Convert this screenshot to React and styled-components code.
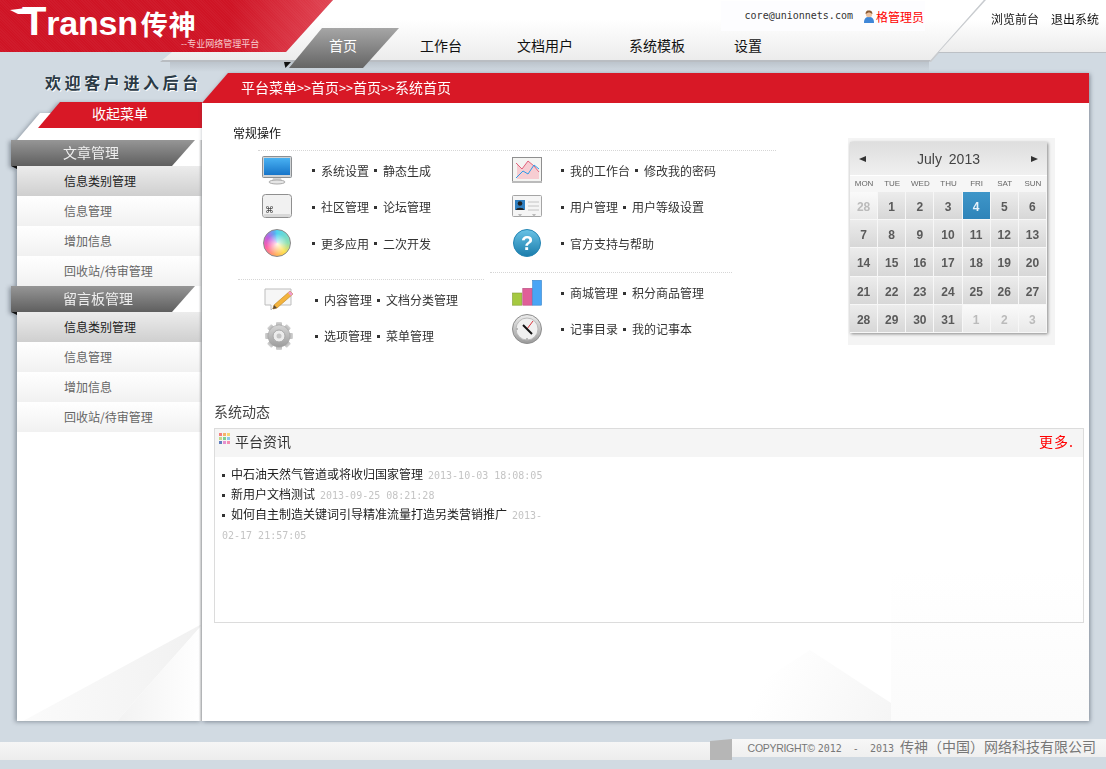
import React from 'react';
import styled, { createGlobalStyle } from 'styled-components';

const GlobalStyle = createGlobalStyle`
html, body {
  margin: 0;
  padding: 0;
}
body {
  background: #d1dae2;
  font-family: "Noto Sans CJK SC", "Liberation Sans", sans-serif;
  font-size: 12px;
  color: #333;
}
`;

const Page = styled.div`
width: 1106px;
height: 769px;
overflow: hidden;
background: #d1dae2;
`;

/* ---------- header ---------- */

const Header = styled.header`
position: relative;
display: flex;
height: 73px;
background: linear-gradient(to bottom, #bcc4cc, #d1dae2) 170px 62px / 759px 10px no-repeat;

&::before {
  content: '';
  position: absolute;
  inset: 0;
  background: linear-gradient(to bottom, #fff 0, #fff 20px, #ececec 60px, #b9bdc2 60px, #b9bdc2 62px, transparent 62px);
  clip-path: polygon(333px 0, 984px 0, 929px 62px, 160px 62px, 172px 52px, 286px 52px);
}

&::after {
  content: '';
  position: absolute;
  inset: 0;
  background: linear-gradient(to bottom, #fff 0, #fff 20px, #ececec 52px, #bcc0c5 52px, #bcc0c5 53px, transparent 53px);
  clip-path: polygon(986px 0, 1106px 0, 1106px 53px, 938px 53px);
}
`;

const Crease = styled.span`
position: absolute;
inset: 0;
background: #c9cbce;
clip-path: polygon(984px 0, 986px 0, 931px 62px, 929px 62px);
`;

const Brand = styled.div`
position: relative;
z-index: 1;
flex: none;
width: 333px;
height: 52px;
box-sizing: border-box;
padding: 3px 0 0 12px;
background:
  repeating-linear-gradient(45deg, rgba(255, 255, 255, 0.03) 0 1px, transparent 1px 2px),
  linear-gradient(100deg, #cf1425 0, #cf1425 68%, #e24a58 100%);
clip-path: polygon(0 0, 333px 0, 286px 52px, 0 52px);
`;

const Wordmark = styled.div`
display: flex;
align-items: baseline;
height: 37px;
color: #fff;
font-family: "Liberation Sans", sans-serif;
font-weight: 700;
font-size: 34px;
line-height: 37px;
letter-spacing: -0.2px;
`;

const WordT = styled.span`
font-size: 40px;
margin-left: 10px;
`;

const WordCn = styled.span`
font-family: "Noto Sans CJK SC", sans-serif;
font-size: 27px;
line-height: 26px;
letter-spacing: 1px;
margin-left: 3px;
`;

const LogoTail = styled.svg`
position: absolute;
left: 10px;
top: 7px;
`;

const Tagline = styled.div`
margin: -2px 0 0 169px;
font-size: 9px;
line-height: 12px;
color: #f7cdd0;
white-space: nowrap;
`;

const Nav = styled.nav`
position: relative;
z-index: 1;
display: flex;
flex: none;
align-items: flex-start;
height: 40px;
margin: 28px -60px 0 -44px;
font-size: 14px;
line-height: 34px;
color: #111;
white-space: nowrap;
`;

const ActiveTab = styled.a`
position: relative;
flex: none;
width: 110px;
height: 40px;
padding-left: 40px;
box-sizing: border-box;
color: #fff;

&::before {
  content: '';
  position: absolute;
  inset: 0;
  background: linear-gradient(to bottom, #a6a6a6, #656565);
  clip-path: polygon(33px 0, 110px 0, 74px 40px, 0 40px);
}

&::after {
  content: '';
  position: absolute;
  left: -5px;
  top: 34px;
  width: 7px;
  height: 6px;
  background: #111;
  clip-path: polygon(0 0, 100% 0, 20% 100%);
}
`;

const TabLabel = styled.span`
position: relative;
z-index: 1;
`;

const NavLink = styled.a`
margin-left: ${(p) => p.$gap}px;
`;

const UserBox = styled.div`
position: relative;
z-index: 1;
display: flex;
align-items: center;
justify-content: flex-end;
flex: none;
width: 204px;
height: 30px;
margin: 1px 0 0 auto;
padding-right: 1px;
box-sizing: border-box;
background: #fdfdff;
`;

const UserMail = styled.span`
font-family: "DejaVu Sans Mono", monospace;
font-size: 10px;
color: #333;
margin: -2px 10px 0 0;
`;

const UserName = styled.span`
color: #f00;
font-size: 12px;
margin-left: 1px;
`;

const TopLinks = styled.div`
position: relative;
z-index: 1;
display: flex;
flex: none;
gap: 12px;
margin: 11px 7px 0 66px;
color: #111;
line-height: 16px;
`;

/* ---------- body ---------- */

const Body = styled.div`
display: flex;
align-items: flex-start;
`;

const Side = styled.aside`
flex: none;
width: 202px;
`;

const Welcome = styled.div`
height: 29px;
padding-left: 45px;
font-size: 16px;
font-weight: 700;
line-height: 18px;
letter-spacing: 3.6px;
color: #2b3a46;
text-shadow: 1px 1px 0 #fff;
white-space: nowrap;
`;

const Rail = styled.div`
position: relative;
height: 581px;
margin: 11px 0 0 17px;
padding-top: 27px;
filter: drop-shadow(-2px 1px 2px rgba(60, 70, 85, 0.45));

&::before {
  content: '';
  position: absolute;
  inset: 0;
  background: #fff;
  clip-path: polygon(23px 0, 185px 0, 185px 100%, 0 100%, 0 27px);
}

&::after {
  content: '';
  position: absolute;
  top: 27px;
  right: 0;
  bottom: 0;
  width: 3px;
  background: linear-gradient(to right, transparent, #bcbcbc);
}
`;

const Collapse = styled.div`
position: absolute;
top: -11px;
left: 21px;
width: 164px;
height: 26px;
background: #d81826;
color: #fff;
font-size: 14px;
line-height: 23px;
text-align: center;
clip-path: polygon(22px 0, 100% 0, 100% 100%, 0 100%);
`;

const FoldWide = styled.span`
position: absolute;
left: 0;
bottom: 0;
width: 185px;
height: 96px;
background: linear-gradient(to right, #fbfbfb, #f1f1f1);
clip-path: polygon(6px 100%, 183px 0, 185px 0, 100px 100%);
`;

const FoldSoft = styled.span`
position: absolute;
right: 0;
bottom: 0;
width: 85px;
height: 96px;
background: linear-gradient(to right, #f2f2f2, #fff);
clip-path: polygon(0 100%, 100% 0, 100% 100%);
`;

const GroupHead = styled.div`
position: relative;
width: 184px;
height: 26px;
margin-left: -6px;
padding-left: 52px;
box-sizing: border-box;
color: #eee;
font-size: 14px;
line-height: 24px;

&::before {
  content: '';
  position: absolute;
  inset: 0;
  background: linear-gradient(to bottom, #969696, #5f5f5f);
  clip-path: polygon(0 0, 100% 0, 161px 100%, 0 100%);
}

&::after {
  content: '';
  position: absolute;
  left: 0;
  top: 26px;
  width: 6px;
  height: 3px;
  background: #111;
  clip-path: polygon(0 0, 100% 0, 100% 100%);
}
`;

const HeadLabel = styled.span`
position: relative;
`;

const RailItem = styled.a`
position: relative;
display: block;
height: 30px;
padding-left: 47px;
box-sizing: border-box;
line-height: 30px;
color: ${(p) => (p.$active ? '#222' : '#666')};
background: ${(p) =>
    p.$active
      ? 'linear-gradient(to bottom, #ececec, #cfcfcf)'
      : 'linear-gradient(to bottom, #fff, #f1f1f1)'};
`;

const Main = styled.main`
flex: none;
width: 887px;
filter: drop-shadow(1px 1px 2px rgba(60, 70, 85, 0.55));
`;

const Crumbs = styled.div`
height: 30px;
padding-left: 39px;
background: #d81826;
color: #fff;
font-size: 14px;
line-height: 29px;
clip-path: polygon(26px 0, 100% 0, 100% 100%, 0 100%);
`;

const CrumbSep = styled.span`
font-size: 12.6px;
`;

const Content = styled.div`
position: relative;
height: 618px;
background: #fff;
`;

const GlowRight = styled.span`
position: absolute;
right: 0;
bottom: 0;
width: 198px;
height: 151px;
background: linear-gradient(to bottom, #fff, #fbfbfb);
`;

const GlowLeft = styled.span`
position: absolute;
left: 498px;
bottom: 0;
width: 191px;
height: 71px;
background: linear-gradient(115deg, #fff 35%, #f5f5f5 100%);
clip-path: polygon(110px 0, 100% 53px, 100% 100%, 0 100%);
`;

const TopRow = styled.div`
position: relative;
display: flex;
align-items: flex-start;
height: 297px;
padding-left: 31px;
`;

const Ops = styled.section`
flex: none;
width: 545px;
padding-top: 22px;
`;

const OpsTitle = styled.div`
height: 16px;
line-height: 16px;
color: #111;
`;

const DotLine = styled.div`
height: 0;
margin: ${(p) => p.$margin};
width: ${(p) => p.$width}px;
border-top: 1px dotted #d6d6d6;
`;

const OpsCols = styled.div`
display: flex;
margin-left: 5px;
`;

const OpsCol = styled.div`
flex: none;
width: 252px;
`;

const OpRow = styled.div`
display: flex;
align-items: center;
height: ${(p) => p.$h || 36}px;
padding-left: ${(p) => p.$indent}px;
`;

const IconBox = styled.span`
display: flex;
align-items: center;
justify-content: center;
flex: none;
width: 30px;
height: 30px;
margin-right: ${(p) => p.$gap}px;
`;

const OpLink = styled.a`
display: inline-flex;
align-items: center;
margin-right: 5px;
color: #333;
white-space: nowrap;

&::before {
  content: '';
  width: 3px;
  height: 3px;
  margin: 1px 6px 0 0;
  background: #333;
}
`;

const Wheel = styled.span`
display: block;
width: 28px;
height: 28px;
border-radius: 50%;
box-sizing: border-box;
border: 1px solid #888;
background:
  radial-gradient(circle at 50% 55%, rgba(255, 255, 255, 0.85) 0, rgba(255, 255, 255, 0) 55%),
  conic-gradient(#4fd3f0 0deg, #8fe0b0 90deg, #ffe14d 140deg, #ffae5a 185deg, #ff5fa8 250deg, #c060e0 300deg, #5fa8f0 345deg, #4fd3f0 360deg);
`;

/* calendar */

const CalFrame = styled.div`
flex: none;
width: 207px;
height: 207px;
margin: 35px 0 0 70px;
padding: 4px 0 0 2px;
box-sizing: border-box;
background: #f4f4f4;
`;

const Calendar = styled.div`
width: 197px;
height: 191px;
background: #f0f0f0;
box-shadow: 1px 1px 3px rgba(0, 0, 0, 0.45);
`;

const CalHead = styled.div`
display: flex;
align-items: center;
justify-content: space-between;
height: 33px;
padding: 0 9px;
box-sizing: border-box;
background: linear-gradient(to bottom, #dedede, #f0f0f0);
font-family: "Liberation Sans", sans-serif;
font-size: 14px;
color: #444;
word-spacing: 3px;
`;

const CalArrow = styled.span`
width: 0;
height: 0;
border-top: 3.5px solid transparent;
border-bottom: 3.5px solid transparent;
border-${(p) => (p.$next ? 'left' : 'right')}: 7px solid #333;
`;

const CalWeek = styled.div`
display: grid;
grid-template-columns: repeat(7, 1fr);
height: 17px;
background: #f6f6f6;
border-top: 1px solid #fff;
box-sizing: border-box;
font-family: "Liberation Sans", sans-serif;
font-size: 8px;
line-height: 15px;
text-align: center;
color: #666;
`;

const CalGrid = styled.div`
display: grid;
grid-template-columns: repeat(7, 1fr);
grid-auto-rows: 28.2px;
`;

const dayStyles = {
  normal: 'linear-gradient(to bottom, #ececec, #d7d7d7)',
  muted: 'linear-gradient(to bottom, #fafafa, #e9e9e9)',
  active: 'linear-gradient(to bottom, #3e96c9, #2f84b9)',
};

const dayColors = { normal: '#5a5a5a', muted: '#bbb', active: '#e6f2fa' };

const CalDay = styled.div`
box-sizing: border-box;
border-right: 1px solid #f7f7f7;
border-bottom: 1px solid #f7f7f7;
background: ${(p) => dayStyles[p.$kind]};
color: ${(p) => dayColors[p.$kind]};
font-family: "Liberation Sans", sans-serif;
font-size: 12px;
font-weight: 700;
line-height: 30px;
text-align: center;
`;

/* news */

const NewsTitle = styled.div`
position: relative;
height: 28px;
padding-left: 12px;
font-size: 14px;
line-height: 22px;
color: #444;
`;

const NewsPanel = styled.section`
position: relative;
width: 870px;
height: 195px;
margin-left: 12px;
box-sizing: border-box;
border: 1px solid #dcdcdc;
`;

const NewsHead = styled.div`
display: flex;
align-items: center;
height: 24px;
padding: 0 9px 4px 4px;
background: #f5f5f5;
font-size: 14px;
color: #333;
`;

const Swatches = styled.span`
display: grid;
grid-template-columns: repeat(3, 3px);
grid-auto-rows: 3px;
gap: 1px;
margin: -6px 5px 0 0;
`;

const Swatch = styled.i`
background: ${(p) => p.$c};
`;

const More = styled.a`
margin-left: auto;
color: #f00;
letter-spacing: 1px;
`;

const NewsList = styled.ul`
width: 325px;
margin: 0;
padding: 7px 0 0 7px;
list-style: none;
line-height: 20px;
`;

const NewsItem = styled.li`
color: #222;

&::before {
  content: '';
  display: inline-block;
  width: 3px;
  height: 3px;
  margin: 0 6px 2px 0;
  background: #333;
}
`;

const NewsDate = styled.span`
margin-left: 5px;
font-family: "DejaVu Sans Mono", monospace;
font-size: 10px;
line-height: 12px;
color: #c4c4c4;
`;

/* footer */

const Footer = styled.footer`
display: flex;
align-items: flex-start;
height: 21px;
margin-top: 18px;
`;

const FootStrip = styled.div`
flex: none;
width: 710px;
height: 18px;
margin-top: 3px;
background: linear-gradient(to bottom, #f6f6f6, #ededed);
`;

const FootBlock = styled.div`
flex: none;
width: 22px;
height: 21px;
background: #b6b6b6;
clip-path: polygon(0 2px, 100% 0, 100% 100%, 0 100%);
`;

const FootText = styled.div`
flex: 1;
height: 18px;
padding-right: 10px;
box-sizing: border-box;
background: linear-gradient(to bottom, #f7f7f7, #efefef);
color: #777;
font-size: 14px;
line-height: 15px;
text-align: right;
white-space: nowrap;
`;

const FootLatin = styled.span`
font-family: "Liberation Sans", sans-serif;
font-size: 10.5px;
letter-spacing: -0.3px;
margin-right: 3px;
`;

const FootYear = styled.span`
font-family: "DejaVu Sans Mono", monospace;
font-size: 10px;
word-spacing: 5px;
margin-right: 6px;
`;

/* ---------- icons ---------- */

const MonitorIcon = () => (
  <svg width="30" height="29" viewBox="0 0 30 29">
    <defs>
      <linearGradient id="scr" x1="0" y1="0" x2="0" y2="1">
        <stop offset="0" stopColor="#49b1f2" />
        <stop offset="1" stopColor="#1775c9" />
      </linearGradient>
    </defs>
    <rect x="0.5" y="0.5" width="29" height="21" rx="1" fill="#cfd3d6" stroke="#8c8f92" />
    <rect x="2" y="2" width="26" height="17" fill="url(#scr)" />
    <path d="M11 22h8l1 3h-10z" fill="#d5d5d5" />
    <ellipse cx="15" cy="26" rx="8" ry="2" fill="#e6e6e6" stroke="#aaa" />
  </svg>
);

const KeyIcon = () => (
  <svg width="30" height="25" viewBox="0 0 30 25">
    <rect x="0.5" y="0.5" width="29" height="23" rx="3" fill="#f1f1f1" stroke="#8f8f8f" />
    <rect x="1.5" y="20" width="27" height="3" rx="1" fill="#d8d8d8" />
    <text x="3" y="19" fontSize="9" fontFamily="DejaVu Sans" fill="#444">⌘</text>
  </svg>
);

const ChatPencilIcon = () => (
  <svg width="30" height="24" viewBox="0 0 30 24">
    <path d="M1 1h26v16H12l-5 5v-5H1z" fill="#f6f6f6" stroke="#bdbdbd" />
    <path d="M26 3l3 3L13 20l-4 1 1-4z" fill="#f3b33d" stroke="#b8801f" strokeWidth="0.6" />
    <path d="M26 3l3 3-2 2-3-3z" fill="#ee9bd0" />
    <path d="M9 21l1-4 3 3z" fill="#5a4a38" />
  </svg>
);

const GearIcon = () => (
  <svg width="30" height="30" viewBox="0 0 30 30">
    <defs>
      <linearGradient id="gear" x1="0" y1="0" x2="0" y2="1">
        <stop offset="0" stopColor="#d6d6d6" />
        <stop offset="1" stopColor="#9c9c9c" />
      </linearGradient>
    </defs>
    {[0, 45, 90, 135, 180, 225, 270, 315].map((a) => (
      <rect key={a} x="12" y="1" width="6" height="6" rx="1" fill="url(#gear)" transform={`rotate(${a} 15 15)`} />
    ))}
    <circle cx="15" cy="15" r="11" fill="url(#gear)" stroke="#a0a0a0" strokeWidth="0.5" />
    <circle cx="15" cy="15" r="6" fill="#ececec" stroke="#a8a8a8" />
    <circle cx="15" cy="15" r="2.5" fill="#c4c4c4" />
  </svg>
);

const TrendIcon = () => (
  <svg width="30" height="26" viewBox="0 0 30 26">
    <rect x="0.5" y="0.5" width="29" height="24" fill="#f4f4f2" stroke="#8f8f8f" />
    <path d="M5 6l5 6 6-8 6 5 5 6v7H5z" fill="#f7cdd2" />
    <path d="M4 6l6 6 6-8 6 5 5 6" fill="none" stroke="#e0607a" />
    <path d="M4 21l7-7 5 3 6-9 5 4" fill="none" stroke="#2e9be8" />
    <rect x="0" y="24" width="30" height="2" fill="#bbb" />
  </svg>
);

const CardIcon = () => (
  <svg width="30" height="24" viewBox="0 0 30 24">
    <rect x="0.5" y="0.5" width="29" height="21" rx="1" fill="#f5f5f5" stroke="#a5a5a5" />
    <rect x="3" y="5" width="10" height="10" fill="#2f7fc0" />
    <circle cx="8" cy="8.5" r="2.3" fill="#222" />
    <path d="M4 15c0-3 8-3 8 0z" fill="#222" />
    <path d="M16 7h11M16 11h11M16 15h11" stroke="#c4c4c4" />
    <path d="M6 19h4l-2 3zM20 19h4l-2 3z" fill="#bbb" />
  </svg>
);

const HelpIcon = () => (
  <svg width="28" height="29" viewBox="0 0 28 29">
    <defs>
      <linearGradient id="help" x1="0" y1="0" x2="0" y2="1">
        <stop offset="0" stopColor="#69c3e6" />
        <stop offset="1" stopColor="#1a7cab" />
      </linearGradient>
    </defs>
    <circle cx="14" cy="14" r="13.5" fill="url(#help)" stroke="#2585b3" />
    <text x="14" y="21" fontSize="20" fontWeight="700" fontFamily="Liberation Sans" textAnchor="middle" fill="#fff">?</text>
  </svg>
);

const BarsIcon = () => (
  <svg width="32" height="28" viewBox="0 0 32 28">
    <rect x="0.5" y="14" width="10" height="13" fill="#a5c940" stroke="#7f9a32" strokeWidth="0.6" />
    <rect x="11.5" y="9" width="10" height="18" fill="#e05f98" stroke="#b4477a" strokeWidth="0.6" />
    <rect x="22" y="0.5" width="9.5" height="26.5" fill="#4aa5f5" stroke="#2f7fc6" strokeWidth="0.6" />
  </svg>
);

const GaugeIcon = () => (
  <svg width="30" height="30" viewBox="0 0 30 30">
    <defs>
      <linearGradient id="rim" x1="0" y1="0" x2="0" y2="1">
        <stop offset="0" stopColor="#ededed" />
        <stop offset="1" stopColor="#9a9a9a" />
      </linearGradient>
    </defs>
    <circle cx="15" cy="15" r="14.5" fill="url(#rim)" stroke="#8d8d8d" />
    <circle cx="15" cy="15" r="11" fill="#f0f0f0" stroke="#bbb" />
    <path d="M15 15l6-8" stroke="#d9303a" />
    <path d="M11 11l9 9" stroke="#111" strokeWidth="2" />
    <circle cx="15" cy="25" r="1" fill="#aaa" />
    <circle cx="5" cy="15" r="1" fill="#aaa" />
  </svg>
);

const AvatarIcon = () => (
  <svg width="12" height="13" viewBox="0 0 12 13">
    <path d="M1 13c0-5 2-6 5-6s5 1 5 6z" fill="#3f87d8" />
    <circle cx="6" cy="4" r="3.2" fill="#eec3a0" />
    <path d="M2.6 4C2.6 1 4 .4 6 .4S9.4 1 9.4 4C8 3 7 2.4 6 2.4S4 3 2.6 4z" fill="#8a5a34" />
  </svg>
);

/* ---------- data ---------- */

const navLinks = [
  { label: '工作台', gap: 21 },
  { label: '文档用户', gap: 55 },
  { label: '系统模板', gap: 56 },
  { label: '设置', gap: 49 },
];

const groups = [
  { title: '文章管理', items: ['信息类别管理', '信息管理', '增加信息', '回收站/待审管理'] },
  { title: '留言板管理', items: ['信息类别管理', '信息管理', '增加信息', '回收站/待审管理'] },
];

const weekDays = ['MON', 'TUE', 'WED', 'THU', 'FRI', 'SAT', 'SUN'];

const days = [
  28, 1, 2, 3, 4, 5, 6, 7, 8, 9, 10, 11, 12, 13, 14, 15, 16, 17, 18, 19, 20,
  21, 22, 23, 24, 25, 26, 27, 28, 29, 30, 31, 1, 2, 3,
];

const dayKind = (i) => {
  if (i === 0 || i > 31) return 'muted';
  return i === 4 ? 'active' : 'normal';
};

const swatches = ['#f47f7f', '#f6b26b', '#f7d774', '#c3d98a', '#7fcf8f', '#8fc9e8', '#5f7fc0', '#e58fd0', '#f48fb0'];

function App() {
  return (
    <Page>
      <GlobalStyle />

      <Header>
        <Crease />
        <Brand>
          <LogoTail width="24" height="8" viewBox="0 0 24 8">
            <path d="M0 3L24 0v7H8z" fill="#fff" />
          </LogoTail>
          <Wordmark>
            <WordT>T</WordT>ransn<WordCn>传神</WordCn>
          </Wordmark>
          <Tagline>--专业网络管理平台</Tagline>
        </Brand>

        <Nav>
          <ActiveTab><TabLabel>首页</TabLabel></ActiveTab>
          {navLinks.map((n) => (
            <NavLink key={n.label} $gap={n.gap}>{n.label}</NavLink>
          ))}
        </Nav>

        <UserBox>
          <UserMail>core@unionnets.com</UserMail>
          <AvatarIcon />
          <UserName>格管理员</UserName>
        </UserBox>

        <TopLinks>
          <a>浏览前台</a>
          <a>退出系统</a>
        </TopLinks>
      </Header>

      <Body>
        <Side>
          <Welcome>欢迎客户进入后台</Welcome>
          <Rail>
            <FoldWide />
            <FoldSoft />
            <Collapse>收起菜单</Collapse>
            {groups.map((g) => (
              <div key={g.title}>
                <GroupHead><HeadLabel>{g.title}</HeadLabel></GroupHead>
                {g.items.map((item, i) => (
                  <RailItem key={item} $active={i === 0}>{item}</RailItem>
                ))}
              </div>
            ))}
          </Rail>
        </Side>

        <Main>
          <Crumbs>
            平台菜单<CrumbSep>&gt;&gt;</CrumbSep>首页<CrumbSep>&gt;&gt;</CrumbSep>首页<CrumbSep>&gt;&gt;</CrumbSep>系统首页
          </Crumbs>
          <Content>
            <GlowRight />
            <GlowLeft />

            <TopRow>
              <Ops>
                <OpsTitle>常规操作</OpsTitle>
                <DotLine $margin="9px 0 1px 25px" $width={518} />
                <OpsCols>
                  <OpsCol>
                    <OpRow $h={36.5} $indent={24}>
                      <IconBox $gap={20}><MonitorIcon /></IconBox>
                      <OpLink>系统设置</OpLink><OpLink>静态生成</OpLink>
                    </OpRow>
                    <OpRow $h={36.5} $indent={24}>
                      <IconBox $gap={20}><KeyIcon /></IconBox>
                      <OpLink>社区管理</OpLink><OpLink>论坛管理</OpLink>
                    </OpRow>
                    <OpRow $h={36.5} $indent={24}>
                      <IconBox $gap={20}><Wheel /></IconBox>
                      <OpLink>更多应用</OpLink><OpLink>二次开发</OpLink>
                    </OpRow>
                    <DotLine $margin="17px 0 2px 0" $width={246} />
                    <OpRow $indent={26}>
                      <IconBox $gap={21}><ChatPencilIcon /></IconBox>
                      <OpLink>内容管理</OpLink><OpLink>文档分类管理</OpLink>
                    </OpRow>
                    <OpRow $indent={26}>
                      <IconBox $gap={21}><GearIcon /></IconBox>
                      <OpLink>选项管理</OpLink><OpLink>菜单管理</OpLink>
                    </OpRow>
                  </OpsCol>
                  <OpsCol>
                    <OpRow $h={36.5} $indent={22}>
                      <IconBox $gap={19}><TrendIcon /></IconBox>
                      <OpLink>我的工作台</OpLink><OpLink>修改我的密码</OpLink>
                    </OpRow>
                    <OpRow $h={36.5} $indent={22}>
                      <IconBox $gap={19}><CardIcon /></IconBox>
                      <OpLink>用户管理</OpLink><OpLink>用户等级设置</OpLink>
                    </OpRow>
                    <OpRow $h={36.5} $indent={22}>
                      <IconBox $gap={19}><HelpIcon /></IconBox>
                      <OpLink>官方支持与帮助</OpLink>
                    </OpRow>
                    <DotLine $margin="10px 0 2px 0" $width={242} />
                    <OpRow $indent={22}>
                      <IconBox $gap={19}><BarsIcon /></IconBox>
                      <OpLink>商城管理</OpLink><OpLink>积分商品管理</OpLink>
                    </OpRow>
                    <OpRow $indent={22}>
                      <IconBox $gap={19}><GaugeIcon /></IconBox>
                      <OpLink>记事目录</OpLink><OpLink>我的记事本</OpLink>
                    </OpRow>
                  </OpsCol>
                </OpsCols>
              </Ops>

              <CalFrame>
                <Calendar>
                  <CalHead>
                    <CalArrow />
                    <span>July 2013</span>
                    <CalArrow $next />
                  </CalHead>
                  <CalWeek>
                    {weekDays.map((d) => <span key={d}>{d}</span>)}
                  </CalWeek>
                  <CalGrid>
                    {days.map((d, i) => (
                      <CalDay key={i} $kind={dayKind(i)}>{d}</CalDay>
                    ))}
                  </CalGrid>
                </Calendar>
              </CalFrame>
            </TopRow>

            <NewsTitle>系统动态</NewsTitle>
            <NewsPanel>
              <NewsHead>
                <Swatches>
                  {swatches.map((c) => <Swatch key={c} $c={c} />)}
                </Swatches>
                平台资讯
                <More>更多.</More>
              </NewsHead>
              <NewsList>
                <NewsItem>中石油天然气管道或将收归国家管理<NewsDate>2013-10-03 18:08:05</NewsDate></NewsItem>
                <NewsItem>新用户文档测试<NewsDate>2013-09-25 08:21:28</NewsDate></NewsItem>
                <NewsItem>如何自主制造关键词引导精准流量打造另类营销推广<NewsDate>2013-<wbr />02-17 21:57:05</NewsDate></NewsItem>
              </NewsList>
            </NewsPanel>
          </Content>
        </Main>
      </Body>

      <Footer>
        <FootStrip />
        <FootBlock />
        <FootText>
          <FootLatin>COPYRIGHT©</FootLatin>
          <FootYear>2012 - 2013</FootYear>
          传神（中国）网络科技有限公司
        </FootText>
      </Footer>
    </Page>
  );
}

export default App;
